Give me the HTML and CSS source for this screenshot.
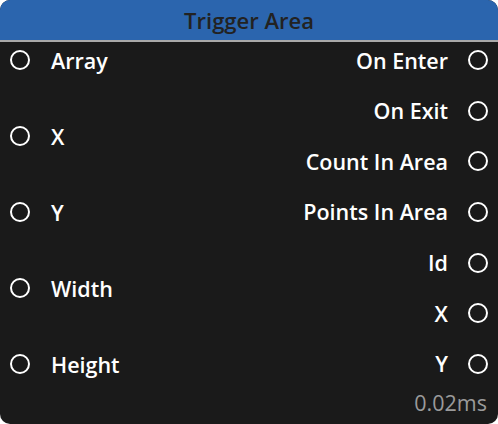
FILE: index.html
```html
<!DOCTYPE html>
<html>
<head>
<meta charset="utf-8">
<link rel="stylesheet" href="styles.css">
</head>
<body>
<div class="node">
  <div class="header">Trigger Area</div>
  <div class="ports">
    <div class="col left">
      <div class="port"><span class="pin"></span><span>Array</span></div>
      <div class="port"><span class="pin"></span><span>X</span></div>
      <div class="port"><span class="pin"></span><span>Y</span></div>
      <div class="port"><span class="pin"></span><span>Width</span></div>
      <div class="port"><span class="pin"></span><span>Height</span></div>
    </div>
    <div class="col right">
      <div class="port"><span>On Enter</span><span class="pin"></span></div>
      <div class="port"><span>On Exit</span><span class="pin"></span></div>
      <div class="port"><span>Count In Area</span><span class="pin"></span></div>
      <div class="port"><span>Points In Area</span><span class="pin"></span></div>
      <div class="port"><span>Id</span><span class="pin"></span></div>
      <div class="port"><span>X</span><span class="pin"></span></div>
      <div class="port"><span>Y</span><span class="pin"></span></div>
    </div>
  </div>
  <div class="footer">0.02ms</div>
</div>
</body>
</html>
```
FILE: styles.css
```css
html, body {
  margin: 0;
  padding: 0;
  background: #ffffff;
}
.node {
  width: 498px;
  height: 424px;
  background: #1a1a1a;
  border-radius: 10px;
  overflow: hidden;
  font-family: "Open Sans", "Noto Sans", sans-serif;
  display: flex;
  flex-direction: column;
}
.header {
  height: 40px;
  background: #2b65ae;
  border-bottom: 2px solid #a9a9a9;
  color: #222222;
  font-size: 22px;
  font-weight: 600;
  display: flex;
  align-items: center;
  justify-content: center;
  box-sizing: content-box;
}
.ports {
  height: 328px;
  margin-top: 6px;
  display: flex;
  justify-content: space-between;
  padding: 0 10px;
}
.col {
  display: flex;
  flex-direction: column;
  justify-content: space-between;
}
.port {
  height: 24px;
  display: flex;
  align-items: center;
  color: #ffffff;
  font-size: 21.5px;
  font-weight: 600;
}
.left .port { gap: 21px; }
.right .port { gap: 20px; justify-content: flex-end; }
.pin {
  width: 16px;
  height: 16px;
  border: 2px solid #ffffff;
  border-radius: 50%;
  flex: none;
}
.footer {
  margin-top: auto;
  height: 44px;
  display: flex;
  align-items: center;
  justify-content: flex-end;
  padding-right: 11px;
  color: #9a9a9a;
  font-size: 21.5px;
}
```
